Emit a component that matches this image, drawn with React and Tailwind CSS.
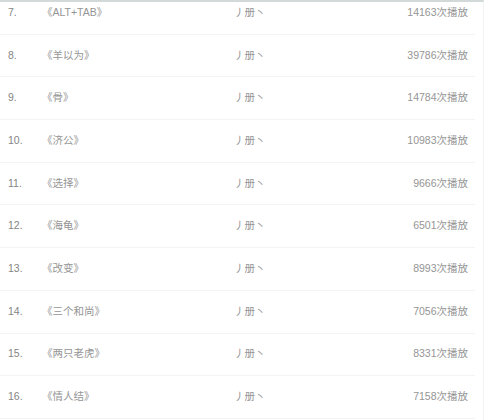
const songs = [
  { no: "7.", title: "《ALT+TAB》", plays: "14163次播放" },
  { no: "8.", title: "《羊以为》", plays: "39786次播放" },
  { no: "9.", title: "《骨》", plays: "14784次播放" },
  { no: "10.", title: "《济公》", plays: "10983次播放" },
  { no: "11.", title: "《选择》", plays: "9666次播放" },
  { no: "12.", title: "《海龟》", plays: "6501次播放" },
  { no: "13.", title: "《改变》", plays: "8993次播放" },
  { no: "14.", title: "《三个和尚》", plays: "7056次播放" },
  { no: "15.", title: "《两只老虎》", plays: "8331次播放" },
  { no: "16.", title: "《情人结》", plays: "7158次播放" },
];

const App = () => {
  return (
    <div
      className="w-[495px] h-[420px] overflow-hidden bg-white"
      style={{ fontFamily: '"Liberation Sans", "Noto Sans CJK SC", sans-serif' }}
    >
      <div className="w-[484px] h-[420px] border-t-2 border-r border-t-[#d3d9d9] border-r-[#f2f2f2]">
        <ul className="-mt-[10px] pr-[8px]">
          {songs.map((song) => (
            <li
              key={song.no}
              className="flex items-center h-[42.7px] border-b border-[#f4f4f4] text-[10.5px] text-[#959595]"
            >
              <span className="w-[42px] pl-[8px] text-[#858585]">{song.no}</span>
              <span className="w-[192px]">{song.title}</span>
              <span className="flex-1">丿册丶</span>
              <span className="pr-[7px]">{song.plays}</span>
            </li>
          ))}
        </ul>
      </div>
    </div>
  );
};

export default App;
